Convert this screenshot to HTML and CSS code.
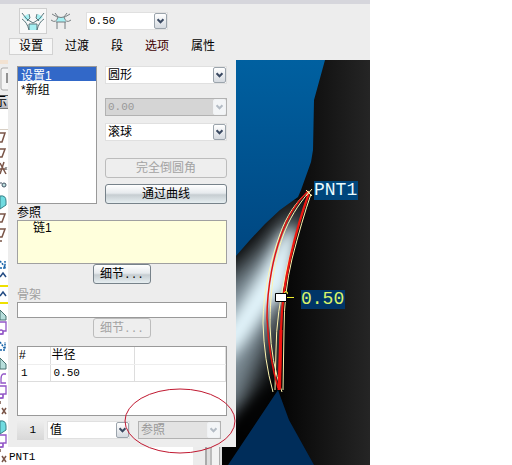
FILE: index.html
```html
<!DOCTYPE html>
<html lang="zh-CN">
<head>
<meta charset="utf-8">
<meta name="viewport" content="width=device-width, initial-scale=1">
<title>设置</title>
<link rel="stylesheet" href="styles.css">
</head>
<body>
<svg class="defs" aria-hidden="true">
  <symbol id="chevron" viewBox="0 0 13 16">
    <path d="M3 6 L6.500 9.500 L10 6" fill="none" stroke="currentColor" stroke-width="2.400"/>
  </symbol>
</svg>
<main class="app">
  <header class="toolbar">
    <div class="tools">
      <button class="tool active" type="button" aria-label="集模式">
        <svg viewBox="0 0 24 22">
          <path d="M2 7 L7 4 L9 8 L6 11Z M22 7 L17 4 L15 8 L18 11Z M8 14 H16 V20 H8Z" fill="#a5f0f3"/>
          <path d="M1 3 Q5 10 12 13 Q19 10 23 3 M1 9 Q6 12 8 20 M23 9 Q18 12 16 20 M8 4 L9 8 L6 11 M16 4 L15 8 L18 11 M8 20 V14 H16 V20" fill="none" stroke="#58777d"/>
        </svg>
      </button>
      <button class="tool" type="button" aria-label="过渡模式">
        <svg viewBox="0 0 24 22">
          <path d="M9 7 H15 L17 12 H7Z" fill="#a5f0f3"/>
          <path d="M3 4 Q12 11 21 4 M2 10 Q7 14 9 7 L6 3 M22 10 Q17 14 15 7 L18 3 M7 12 H17 M8 12 V19 M16 12 V19" fill="none" stroke="#777f82"/>
        </svg>
      </button>
      <div class="combo tool-combo">
        <select class="latin" aria-label="半径"><option>0.50</option></select>
        <svg class="arrow" aria-hidden="true"><use href="#chevron"/></svg>
      </div>
    </div>
    <nav class="tabs">
      <button class="tab current" type="button">设置</button>
      <button class="tab" type="button">过渡</button>
      <button class="tab" type="button">段</button>
      <button class="tab changed" type="button">选项</button>
      <button class="tab" type="button">属性</button>
    </nav>
  </header>

  <aside class="tree">
    <svg viewBox="0 0 8 405" aria-hidden="true">
      <defs><linearGradient id="bar" x2="0" y2="1"><stop stop-color="#eee"/><stop offset="1" stop-color="#b8b8be"/></linearGradient></defs>
      <path d="M0 0H8V4H0Z" fill="#f2e2d2"/>
      <path d="M0 4H8V48H0Z" fill="#ededed"/>
      <path d="M8 8H3Q1 8 1 10V28Q1 30 3 30H8" fill="#f4f4f4" stroke="#aaa"/>
      <path d="M7 13V23" stroke="#333"/>
      <path d="M0 35H8V48H0Z" fill="url(#bar)"/>
      <path d="M0 35.500H8" stroke="#555"/>
      <text class="clipped" x="-5" y="46">示</text>
      <path d="M0 48.500H8" stroke="#777"/>
      <path d="M0 69.500H8" stroke="#d8cfc4"/>
      <g fill="none" stroke="#7a5548" stroke-width="1.500">
        <path d="M0 73H5L2 82H0 M0 89H5L2 97H0 M0 103L6 114 M0 109H6 M0 114L4 102 M0 154H5L2 162H0 M0 169H5L2 177H0 M0 181H2"/>
        <path d="M2 348L6 354M6 348L2 354 M2 396L6 402M6 396L2 402 M0 341V344M0 389V392"/>
      </g>
      <path d="M5 107L7 110M7 107L5 110" stroke="#888"/>
      <path d="M0 123H2" stroke="#456"/><circle cx="4" cy="125" r="2" fill="#bde0de" stroke="#456"/>
      <g fill="#6fdbe0" stroke="#397f86"><path d="M0 136Q6 135 6 141V145L0 149Z"/><path d="M0 361Q6 360 6 366V370L0 374Z"/></g>
      <g fill="none" stroke="#1763a8" stroke-width="1.500" stroke-dasharray="2 1">
        <path d="M0 201L5 207V201M0 208H6 M0 282L5 289V282M0 290H6"/>
      </g>
      <path d="M0 217L3 213L6 217 M0 236L3 232L6 236" fill="none" stroke="#234b83" stroke-width="1.500"/>
      <path d="M0 226H8M0 243H8" stroke="#eee000" stroke-width="2"/>
      <g fill="#b6dedb" stroke="#47706e"><path d="M0 250L6 256V260H0Z"/><path d="M0 298L6 304V309H0Z"/></g>
      <g fill="#fff" stroke="#9256c7" stroke-width="1.300">
        <path d="M0 262H6V271H3V274H0"/><path d="M6 314H3Q1 315 1 319V323H6"/>
        <path d="M0 326H6V334H3V338H0"/><path d="M0 375H6V383H3V387H0"/>
        <circle cx="1" cy="272" r="2"/><circle cx="1" cy="336" r="2"/><circle cx="1" cy="385" r="2"/>
      </g>
    </svg>
  </aside>

  <form class="panel">
    <div class="sets">
      <select class="list" size="8" aria-label="设置">
        <option selected>设置1</option>
        <option>*新组</option>
      </select>
      <div class="shape">
        <div class="combo">
          <select aria-label="截面形状"><option>圆形</option></select>
          <svg class="arrow" aria-hidden="true"><use href="#chevron"/></svg>
        </div>
        <div class="combo disabled conic">
          <select class="latin" aria-label="圆锥参数" disabled><option>0.00</option></select>
          <svg class="arrow" aria-hidden="true"><use href="#chevron"/></svg>
        </div>
        <div class="combo rolling">
          <select aria-label="创建方法"><option>滚球</option></select>
          <svg class="arrow" aria-hidden="true"><use href="#chevron"/></svg>
        </div>
        <button class="btn full-round" type="button" disabled>完全倒圆角</button>
        <button class="btn" type="button">通过曲线</button>
      </div>
    </div>

    <label class="caption" for="refs">参照</label>
    <textarea class="refs" id="refs" readonly>链1</textarea>
    <button class="btn details" type="button">细节<span class="latin">...</span></button>

    <label class="caption muted" for="spine">骨架</label>
    <input class="spine" id="spine" type="text">
    <button class="btn details" type="button" disabled>细节<span class="latin">...</span></button>

    <div class="radii">
      <table>
        <colgroup><col class="col-id"><col class="col-radius"><col></colgroup>
        <thead><tr><th>#</th><th>半径</th><th></th></tr></thead>
        <tbody><tr><td class="latin">1</td><td class="latin">0.50</td><td></td></tr></tbody>
      </table>
    </div>

    <div class="entry">
      <output class="index latin">1</output>
      <div class="combo">
        <select aria-label="值"><option>值</option></select>
        <svg class="arrow" aria-hidden="true"><use href="#chevron"/></svg>
      </div>
      <div class="combo disabled pale">
        <select aria-label="参照" disabled><option>参照</option></select>
        <svg class="arrow" aria-hidden="true"><use href="#chevron"/></svg>
      </div>
      <svg class="mark" viewBox="0 0 112 66" aria-hidden="true"><ellipse cx="56" cy="33" rx="55" ry="32" fill="none" stroke="#c01830"/></svg>
    </div>
  </form>

  <footer class="status">
    <span class="latin">PNT1</span>
    <span class="scroll"></span>
  </footer>

  <section class="view">
    <svg viewBox="222 60 148 405" preserveAspectRatio="xMinYMin slice" role="img" aria-label="PNT1 0.50">
      <defs>
        <linearGradient id="sky" x2="0" y2="1"><stop stop-color="#0060a0"/><stop offset=".5" stop-color="#004680"/><stop offset="1" stop-color="#002850"/></linearGradient>
        <linearGradient id="dark"><stop offset=".35" stop-color="#020202"/><stop offset="1" stop-color="#252525"/></linearGradient>
        <linearGradient id="fade" x2="0" y2="1"><stop stop-color="#fff" stop-opacity="0"/><stop offset=".55" stop-color="#555" stop-opacity=".2"/><stop offset="1" stop-color="#222"/></linearGradient>
        <filter id="soft" x="-50%" y="-50%" width="200%" height="200%"><feGaussianBlur stdDeviation="7"/></filter>
        <filter id="softer" x="-50%" y="-50%" width="200%" height="200%"><feGaussianBlur stdDeviation="12"/></filter>
        <clipPath id="body"><path d="M325 60L314 100L313 150L311 162L301 190L298 197L280 210L265 224L250 240L236 256L222 270V465H370V60Z"/></clipPath>
        <clipPath id="flank"><path d="M222 200H310L300 220L290 258L283 290L282 330L281 392L222 465Z"/></clipPath>
      </defs>
      <path d="M222 60H370V465H222Z" fill="url(#sky)"/>
      <g clip-path="url(#body)">
        <path d="M222 60H370V465H222Z" fill="url(#dark)"/>
        <g clip-path="url(#flank)">
          <path d="M205 300L262 246L300 198L290 290L274 330L240 412L205 430Z" fill="#7d8c95" filter="url(#softer)"/>
          <path d="M205 355L236 312L262 270L282 234L298 226L288 292L270 306L244 344L205 385Z" fill="#e2f4fb" filter="url(#soft)"/>
          <path d="M274 265L289 265L283 300L281 390L274 374L268 310Z" fill="url(#fade)"/>
        </g>
        <path d="M222 440L240 414L264 390L274 391L240 450L222 465Z" fill="#050505" filter="url(#soft)"/>
      </g>
      <path d="M278 390L228 465H314L289 420Z" fill="#002d5a"/>
      <g fill="none">
        <path d="M309 191C296 201 286 217 280 234C272 256 263 290 263 323Q264 360 273 392M309 192C298 205 289 219 283 236C275 258 270 290 270 326Q271 362 282 392M309 192Q295 235 287 267Q276 315 276 350L275 390M311 194Q302 220 292 259Q284 292 284 330L283 390" stroke="#fff5b0"/>
        <path d="M308 191C297 202 288 216 282 233C274 254 267 286 267 318Q269 358 278 388" stroke="#e01410" stroke-width="1.500"/>
        <path d="M309 193Q298 223 290 259Q282 294 281 330L280 389" stroke="#ee1710" stroke-width="2.200"/>
        <path d="M281 330L279 390" stroke="#f41410" stroke-width="3"/>
        <path d="M306 190L312 196M312 189L306 196" stroke="#fff5b0"/>
        <path d="M284 297.500H294" stroke="#efef30"/>
        <circle cx="286" cy="293" r="1.500" stroke="#efef30"/>
      </g>
      <path d="M275.500 293.500H286.500V301.500H275.500Z" fill="#fff" stroke="#000"/>
      <path d="M314 181H358V200H314Z" fill="#00467c"/>
      <path d="M301 290H345V309H301Z" fill="#003567"/>
      <text class="note" x="314" y="195">PNT1</text>
      <text class="note value" x="301" y="304">0.50</text>
    </svg>
  </section>
</main>
</body>
</html>
```
FILE: styles.css
```css
* { box-sizing: border-box; }

body {
  margin: 0;
  background: #fff;
  color: #000;
  font: 12px/14px "Liberation Sans", "Noto Sans CJK SC", sans-serif;
}

button, select, input, textarea { font: inherit; color: inherit; margin: 0; }

.defs { position: absolute; width: 0; height: 0; }

.latin { font-family: "Liberation Mono", monospace; font-size: 11px; }

.app {
  display: grid;
  grid-template-columns: 8px 214px 14px 1fr;
  grid-template-rows: auto auto 1fr;
  max-width: 370px;
  min-height: 100vh;
}

/* Toolbar */
.toolbar {
  grid-column: 1 / -1;
  grid-row: 1;
  padding: 4px 9px 5px;
  border-top: 4px solid #d6d6dc;
  background: #ededed;
}

.tools { display: flex; align-items: center; padding-left: 10px; }

.tool {
  display: flex;
  width: 28px;
  height: 26px;
  padding: 1px;
  border: 1px solid transparent;
  background: none;
}

.tool.active { border-color: #cfcfcf; background: #f8f8f8; }
.tool svg { width: 24px; height: 22px; }
.tool-combo { width: 82px; margin-left: 11px; }

.tabs { display: flex; gap: 2px; padding-top: 4px; }

.tab {
  height: 17px;
  padding: 0 9px;
  border: 1px solid transparent;
  background: none;
  line-height: 15px;
}

.tab.current { border-color: #d2d2d2; background: #f6f6f6; }
.tab.changed { color: #400000; }

/* Drop-downs */
.combo {
  display: flex;
  height: 18px;
  border: 1px solid #e0e0e0;
  background: #fff;
}

.combo select {
  flex: 1;
  min-width: 0;
  padding: 0 2px;
  border: 0;
  background: none;
  appearance: none;
  opacity: 1;
}

.arrow {
  width: 13px;
  height: 16px;
  border: 1px solid #9ba4ac;
  border-radius: 2px;
  background: linear-gradient(#fff, #d5dae0);
  color: #3b4a62;
}

.disabled { border-color: #b2b2b2; background: #d5d5d5; color: #999; }
.disabled .arrow { border-color: #f0f2f4; background: #f3f5f7; color: #b4bcc5; }
.pale { background: #e3e3e3; }

/* Buttons */
.btn {
  height: 20px;
  padding: 0;
  border: 1px solid #77828a;
  border-radius: 3px;
  background: linear-gradient(#fff, #e6eaed 45%, #c6cdd1 55%, #e6eef1);
  line-height: 18px;
}

.btn:disabled { border-color: #bcbcbc; background: #eee; color: #a3a3a3; }
.details { align-self: center; width: 58px; }

/* Settings panel */
.panel {
  position: relative;
  z-index: 1;
  grid-column: 2 / 4;
  grid-row: 2;
  display: flex;
  flex-direction: column;
  padding: 6px 9px 7px;
  background: #ededed;
}

.sets { display: flex; gap: 8px; }

.list {
  width: 80px;
  padding: 0;
  border: 1px solid #999;
  border-radius: 0;
  background: #fff;
  overflow: hidden;
}

.list option {
  display: flex;
  align-items: center;
  height: 14px;
  min-height: 0;
  padding: 0 3px;
}
.list option:checked { background: linear-gradient(#3268c8, #3268c8); color: #fff; }

.shape { flex: 1; display: flex; flex-direction: column; }
.conic { margin-top: 14px; }
.rolling { margin-top: 7px; }
.full-round { margin: 17px 0 6px; }

.caption { margin-top: 3px; line-height: 13px; }
.muted { margin-top: 5px; color: #a0a0a0; }

.refs {
  height: 44px;
  padding: 0 15px;
  border: 1px solid #a0a0a0;
  background: #ffffdc;
  resize: none;
}

.spine { height: 16px; border: 1px solid #999; background: #fff; }

.radii { height: 70px; margin-top: 8px; border: 1px solid #999; background: #fff; }
.radii table { width: 100%; border-collapse: collapse; table-layout: fixed; }
.radii th, .radii td {
  height: 17px;
  padding: 0 3px;
  border-right: 1px solid #ddd;
  border-bottom: 1px solid #ddd;
  text-align: left;
  font-weight: normal;
}
.radii th { border-bottom-color: #eee; padding: 0 1px; }
.col-id { width: 32px; }
.col-radius { width: 84px; }

.entry {
  position: relative;
  display: flex;
  align-items: center;
  height: 20px;
  margin-top: 4px;
  padding-right: 6px;
}

.entry .combo { flex: 1; }
.entry .disabled { margin-left: 8px; }

.index {
  width: 27px;
  height: 20px;
  margin-right: 3px;
  padding-right: 8px;
  background: linear-gradient(#eee, #d8d8d8);
  line-height: 20px;
  text-align: right;
}

/* Red ellipse drawn over the reference drop-down */
.mark {
  position: absolute;
  right: -9px;
  bottom: -14px;
  width: 112px;
  height: 66px;
  pointer-events: none;
}

/* Surroundings */
.tree { grid-column: 1; grid-row: 2 / 4; overflow: hidden; }
.tree svg { display: block; width: 8px; height: 405px; }
.clipped { font-size: 12px; }

.status {
  grid-column: 2;
  grid-row: 3;
  display: flex;
  justify-content: space-between;
  padding-left: 1px;
  line-height: 20px;
  overflow: hidden;
  max-height: 18px;
}

.scroll {
  width: 29px;
  background: linear-gradient(90deg, #ececec 0 12px, #aaa 12px 14px, #ddd 14px 17px, #bbb 17px 19px, #f2f2f2 19px 26px, #aaa 26px 27px, #ddd 27px);
}

.view { grid-column: 3 / 5; grid-row: 2 / 4; overflow: hidden; }
.view svg { display: block; width: 100%; height: 100%; }

.note { fill: #e9fbff; font: 18px "Liberation Mono", monospace; }
.note.value { fill: #d9f36a; }
```
